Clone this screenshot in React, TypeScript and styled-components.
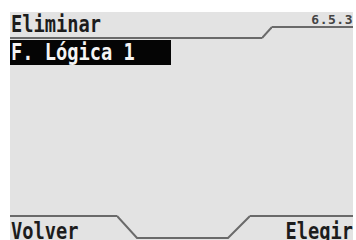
import React from 'react';
import styled, { createGlobalStyle } from 'styled-components';

const GlobalStyle = createGlobalStyle`
  body {
    margin: 0;
    background-color: #ffffff;
    overflow: hidden;
  }
`;

const LINE = '#6a6a6a';

const Page = styled.div`
  width: 356px;
  height: 240px;
  padding: 12px 3px 0 10px;
  box-sizing: border-box;
`;

const Screen = styled.div`
  width: 343px;
  height: 228px;
  background-color: #e3e3e3;
  display: flex;
  flex-direction: column;
  font-family: 'DejaVu Sans Mono', monospace;
  color: #1c1c1c;
  overflow: hidden;
`;

const Header = styled.div`
  display: flex;
  height: 27px;
`;

const TitleCell = styled.div`
  flex: 1;
  box-sizing: border-box;
  border-bottom: 2px solid ${LINE};
  padding-left: 1px;
`;

const LcdText = styled.span<{ $invert?: boolean }>`
  display: inline-block;
  font-size: 18.7px;
  font-weight: bold;
  line-height: 22px;
  transform: scaleY(1.2);
  transform-origin: 0 0;
  white-space: pre;
  color: ${(p) => (p.$invert ? '#f4f4f4' : '#1c1c1c')};
`;

const VersionCell = styled.div`
  width: 81px;
  height: 16px;
  box-sizing: border-box;
  border-bottom: 2px solid ${LINE};
  text-align: right;
  font-size: 13px;
  font-weight: bold;
  line-height: 13px;
  padding-top: 1px;
  color: #444444;
  letter-spacing: 0.5px;
`;

const Body = styled.div`
  flex: 1;
  padding-top: 1px;
`;

const SelectedItem = styled.div`
  width: 161px;
  height: 25px;
  background-color: #050505;
  padding-left: 1px;
  box-sizing: border-box;
`;

const Footer = styled.div`
  display: flex;
  height: 25px;
`;

const SoftKey = styled.div<{ $align: 'left' | 'right'; $width?: number }>`
  ${(p) => (p.$width ? `width: ${p.$width}px;` : 'flex: 1;')}
  box-sizing: border-box;
  border-top: 2px solid ${LINE};
  text-align: ${(p) => p.$align};
  padding: 2px 0 0 1px;
`;

const App: React.FC = () => {
  return (
    <>
      <GlobalStyle />
      <Page>
        <Screen>
          <Header>
            <TitleCell>
              <LcdText>Eliminar</LcdText>
            </TitleCell>
            <svg width="10" height="27">
              <polyline points="0,26 10,15" fill="none" stroke={LINE} strokeWidth="2" />
            </svg>
            <VersionCell>6.5.3</VersionCell>
          </Header>
          <Body>
            <SelectedItem>
              <LcdText $invert>F. Lógica 1</LcdText>
            </SelectedItem>
          </Body>
          <Footer>
            <SoftKey $align="left" $width={107}>
              <LcdText>Volver</LcdText>
            </SoftKey>
            <svg width="133" height="25">
              <polyline points="0,1 20,23 111,23 133,1" fill="none" stroke={LINE} strokeWidth="2" />
            </svg>
            <SoftKey $align="right">
              <LcdText>Elegir</LcdText>
            </SoftKey>
          </Footer>
        </Screen>
      </Page>
    </>
  );
};

export default App;
